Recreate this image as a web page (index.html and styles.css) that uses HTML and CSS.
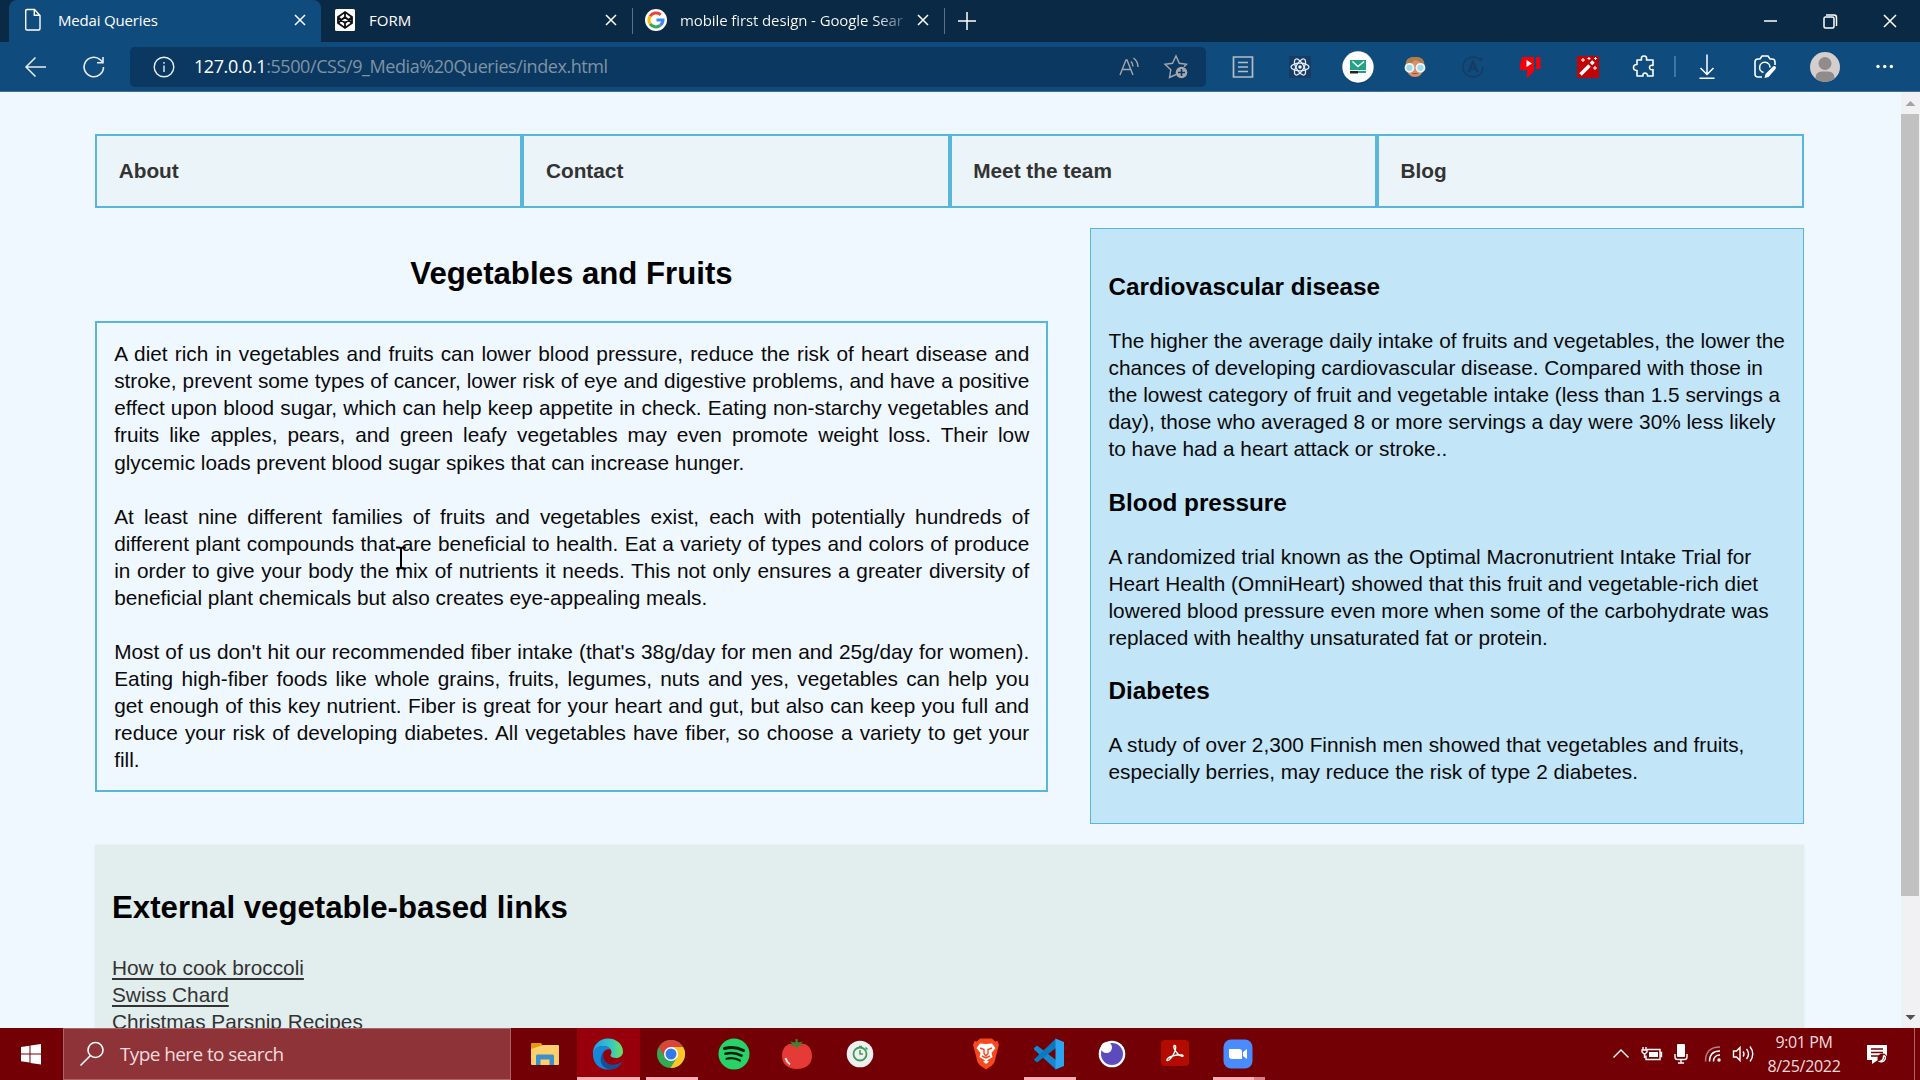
FILE: index.html
```html
<!DOCTYPE html>
<html lang="en">
<head>
<meta charset="utf-8">
<title>Medai Queries</title>
<link rel="stylesheet" href="styles.css">
</head>
<body>
<div class="tabs">
  <div class="tab active">
    <svg class="fav" width="20" height="24" viewBox="0 0 20 24" fill="none" stroke="#fff" stroke-width="1.4"><path d="M2.7 2.7Q2.7 1.5 4 1.5h7.500l5.500 6v13Q17 22 15.700 22H4Q2.700 22 2.700 20.700zM11.300 1.500v5.700h5.700"/></svg>
    <span class="t1">Medai Queries</span>
    <svg class="x" width="14" height="14" viewBox="0 0 14 14"><path d="M2 2l10 10M12 2L2 12"/></svg>
  </div>
  <div class="tab second">
    <svg class="fav" width="20" height="22" viewBox="0 0 20 22"><rect width="20" height="22" rx="1.500" fill="#fff"/><path d="M10 3l7 5v6l-7 5-7-5V8zM10 3v5M10 14v5M3 8l7 6 7-6M3 14l7-6 7 6" fill="none" stroke="#111" stroke-width="1.800"/></svg>
    <span class="t2">FORM</span>
    <svg class="x" width="14" height="14" viewBox="0 0 14 14"><path d="M2 2l10 10M12 2L2 12"/></svg>
  </div>
  <div class="tab third">
    <svg class="fav" width="22" height="22" viewBox="0 0 22 22"><circle cx="11" cy="11" r="11" fill="#fff"/><g fill="none" stroke-width="3"><path d="M5.100 7.200A7 7 0 0 1 15.700 5.800" stroke="#ea4335"/><path d="M5.100 7.200a7.200 7.200 0 0 0 0 7.600" stroke="#fbbc05"/><path d="M5.100 14.800a7 7 0 0 0 10 1.700" stroke="#34a853"/><path d="M15.100 16.500A7 7 0 0 0 18 11h-6.500" stroke="#4285f4"/></g></svg>
    <span class="t3">mobile first design - Google Sear</span>
    <svg class="x" width="14" height="14" viewBox="0 0 14 14"><path d="M2 2l10 10M12 2L2 12"/></svg>
  </div>
  <svg class="plus" width="20" height="20" viewBox="0 0 20 20"><path d="M10 1v18M1 10h18"/></svg>
  <div class="winbtns">
    <svg width="60" height="20" viewBox="0 0 60 20"><path d="M24 10h13"/></svg>
    <svg width="60" height="20" viewBox="0 0 60 20"><rect x="24" y="6" width="10" height="11" rx="1.500"/><path d="M26 4h8q2.500 0 2.500 2.500V15"/></svg>
    <svg width="60" height="20" viewBox="0 0 60 20"><path d="M24 4l12 12M36 4L24 16"/></svg>
  </div>
</div>

<div class="toolbar">
  <svg class="back" width="24" height="24" viewBox="0 0 24 24"><path d="M22 12H2M11.500 2.500L2 12l9.500 9.500"/></svg>
  <svg class="reload" width="24" height="24" viewBox="0 0 24 24"><path d="M21.500 12A9.700 9.700 0 1 1 18.300 4.800L21 7.500M21 2v5.800h-6"/></svg>
  <div class="address">
    <svg width="22" height="22" viewBox="0 0 22 22" class="info"><circle cx="11" cy="11" r="9.800"/><path d="M11 9.500V16M11 6v1.800"/></svg>
    <span class="url"><b>127.0.0.1</b>:5500/CSS/9_Media%20Queries/index.html</span>
    <svg class="aloud" width="22" height="22" viewBox="0 0 22 22"><path d="M2 19L8 4h1l6 15M4.500 13.500h8M13 5.500q2 2 2 5M15.500 2q4.500 3.500 4.500 9"/></svg>
    <svg class="star" width="26" height="26" viewBox="0 0 26 26"><path d="M13 20.500l-6.500 3 1.300-7.800L2 10.300l7.500-1L13 2l3.300 7.300 7.200 1-2.500 2.500"/><circle cx="18.500" cy="18.500" r="5.800" fill="#a4a8ae" stroke="none"/><path d="M18.500 15v7M15 18.500h7" stroke="#0b3860" stroke-width="1.600"/></svg>
  </div>
  <div class="exts">
    <svg width="28" height="28" viewBox="0 0 28 28"><path d="M4.500 4h19v20h-19zM9 9.500h10M9 14h10M9 18.500h10" fill="none" stroke="#b6bcc3" stroke-width="1.700"/></svg>
    <svg width="28" height="28" viewBox="0 0 28 28"><path fill="#173b63" d="M3 3h22v22H3z"/><g fill="none" stroke="#e0edfb" stroke-width="1.300"><ellipse cx="14" cy="14" rx="9" ry="3.800"/><ellipse cx="14" cy="14" rx="9" ry="3.800" transform="rotate(60 14 14)"/><ellipse cx="14" cy="14" rx="9" ry="3.800" transform="rotate(120 14 14)"/></g><circle cx="14" cy="14" r="1.700" fill="#fff"/></svg>
    <svg width="36" height="36" viewBox="0 0 36 36"><circle cx="18" cy="19" r="15.500" fill="#0b3b66"/><circle cx="18" cy="18" r="15.700" fill="#fff"/><path fill="#21a384" d="M10 11h16v10H10z"/><path d="M12.500 12.500l5.500 5 6-5" fill="none" stroke="#fff" stroke-width="1.500"/><path fill="#222" d="M10 22h8v2.500h-8z"/><path fill="#21a384" d="M18 22h8v2h-8z"/></svg>
    <svg width="28" height="28" viewBox="0 0 28 28"><path d="M5 15Q3 4 14 4t9 11q-2 9-9 9t-9-9" fill="#d9906c"/><path d="M5 13Q4 4 14 4t9 9q-4-5-9-6-4 4-9 6" fill="#b37b48"/><g fill="#9edbe9" stroke="#eef5f7" stroke-width="1.800"><circle cx="8.500" cy="14.800" r="4"/><circle cx="19.500" cy="14.800" r="4"/></g><path d="M11.500 20.500h5" stroke="#944e42"/></svg>
    <svg width="28" height="28" viewBox="0 0 28 28"><path d="M22 8A10 10 0 1 0 24 14" fill="none" stroke="#173b63" stroke-width="1.600"/><circle cx="22" cy="6" r="1.500" fill="#173b63"/><path d="M9.500 19L14 8.500 18.500 19M11 15.500h6" fill="none" stroke="#173b63" stroke-width="2.300"/></svg>
    <svg width="28" height="28" viewBox="0 0 28 28"><path d="M6 4h12v14l-6 6.500-1.500-1 1-6.500H4V12zM20 4h4.500v12H20z" fill="#f50008"/><path d="M10.500 7l5.500 3.500-5.500 3.500z" fill="#fff"/></svg>
    <svg width="28" height="28" viewBox="0 0 28 28"><path fill="#c00508" d="M3 3h22v22H3z"/><path d="M6.500 21.500l9-9" stroke="#fff" stroke-width="3.500"/><path d="M17 11l2.500-2.500" stroke="#fff" stroke-width="3.500"/><path d="M9 5v4M7 7h4M15 4v3M13.500 5.500h3M21 13v4M19 15h4M21.500 4v3M20 5.500h3" stroke="#fff"/></svg>
    <svg width="28" height="28" viewBox="0 0 28 28"><path d="M6 7h4.500q-.8-4 2.500-4t2.500 4H22v5.500q-3.500-.8-3.500 2t3.500 2V23h-5.500q.3-1.500-1-2.500-1.500-1-3 0-1 1-.5 2.500H6v-5.500q-3.500 0-3.500-3T6 11.500z" fill="none" stroke="#fff" stroke-width="1.600" stroke-linejoin="round"/></svg>
  </div>
  <i class="divider"></i>
  <div class="exts right">
    <svg width="28" height="28" viewBox="0 0 28 28"><path d="M14 1.500v20M7.500 15l6.500 6.500 6.500-6.500M6.500 25.200h15" fill="none" stroke="#fff" stroke-width="1.500"/></svg>
    <svg width="28" height="28" viewBox="0 0 28 28"><path d="M11 24H7q-3 0-3-3V9q0-3 3-3h2l2-3h6l2 3h2q3 0 3 3v3M12.500 19.500a5.200 5.200 0 1 1 6.500-5" fill="none" stroke="#fff" stroke-width="1.600"/><path d="M13.500 25l1-4 7.500-7.500q1.500-1 2.500 0t0 2.500L17.500 24z" fill="#fff"/></svg>
    <svg class="avatar" width="30" height="30" viewBox="0 0 30 30"><clipPath id="av"><circle cx="15" cy="15" r="15"/></clipPath><g clip-path="url(#av)"><path fill="#d2cfce" d="M0 0h30v30H0z"/><circle cx="15" cy="11.500" r="6.500" fill="#918b89"/><path d="M5.500 30v-4q0-6.500 6.500-6.500h6q6.500 0 6.500 6.500v4z" fill="#918b89"/></g></svg>
    <svg width="28" height="28" viewBox="0 0 28 28" fill="#fff"><circle cx="7" cy="13.500" r="1.700"/><circle cx="13.700" cy="13.500" r="1.700"/><circle cx="20.400" cy="13.500" r="1.700"/></svg>
  </div>
</div>

<div class="viewport">
  <div class="page">
    <nav class="menu">
      <a>About</a><a>Contact</a><a>Meet the team</a><a>Blog</a>
    </nav>
    <div class="columns">
      <main>
        <h2>Vegetables and Fruits</h2>
        <article>
          <p>A diet rich in vegetables and fruits can lower blood pressure, reduce the risk of heart disease and stroke, prevent some types of cancer, lower risk of eye and digestive problems, and have a positive effect upon blood sugar, which can help keep appetite in check. Eating non-starchy vegetables and fruits like apples, pears, and green leafy vegetables may even promote weight loss. Their low glycemic loads prevent blood sugar spikes that can increase hunger.</p>
          <p>At least nine different families of fruits and vegetables exist, each with potentially hundreds of different plant compounds that are beneficial to health. Eat a variety of types and colors of produce in order to give your body the mix of nutrients it needs. This not only ensures a greater diversity of beneficial plant chemicals but also creates eye-appealing meals.</p>
          <p>Most of us don't hit our recommended fiber intake (that's 38g/day for men and 25g/day for women). Eating high-fiber foods like whole grains, fruits, legumes, nuts and yes, vegetables can help you get&nbsp;enough of this key nutrient. Fiber is great for your heart and gut, but also can keep you full and reduce your risk of developing diabetes. All vegetables have fiber, so choose a variety to get your fill.</p>
        </article>
      </main>
      <aside>
        <h3>Cardiovascular disease</h3>
        <p>The higher the average daily intake of fruits and vegetables, the lower the chances of developing cardiovascular disease. Compared with those in the lowest category of fruit and vegetable intake (less than 1.5 servings a day), those who averaged 8 or more servings a day were 30% less likely to have had a heart attack or stroke..</p>
        <h3>Blood pressure</h3>
        <p>A randomized trial known as the Optimal Macronutrient Intake Trial for Heart Health (OmniHeart) showed that this fruit and vegetable-rich diet lowered blood pressure even more when some of the carbohydrate was replaced with healthy unsaturated fat or protein.</p>
        <h3>Diabetes</h3>
        <p>A study of over 2,300 Finnish men showed that vegetables and fruits, especially berries, may reduce the risk of type 2 diabetes.</p>
      </aside>
    </div>
    <section class="links">
      <h2>External vegetable-based links</h2>
      <a>How to cook broccoli</a>
      <a>Swiss Chard</a>
      <a>Christmas Parsnip Recipes</a>
    </section>
  </div>
  <div class="scrollbar">
    <svg width="19" height="22" viewBox="0 0 19 22"><path d="M4.500 14l5-5 5 5z" fill="#a3a3a3"/></svg>
    <div class="thumb"></div>
    <svg class="down" width="19" height="22" viewBox="0 0 19 22"><path d="M4.500 9l5 5 5-5z" fill="#505050"/></svg>
  </div>
  <svg class="cursor" width="12" height="24" viewBox="0 0 12 24"><path d="M1 1.500h3q2 0 2 2 0-2 2-2h3M6 3v18M1 22.500h3q2 0 2-2 0 2 2 2h3" fill="none" stroke="#000" stroke-width="2"/></svg>
</div>

<div class="taskbar">
  <div class="start"><svg width="22" height="22" viewBox="0 0 22 22" fill="#fff"><path d="M1 4l8.500-1.300V10.500H1zM10.500 2.500L21 1v9.500H10.500zM1 11.500h8.500v8L1 18.300zM10.500 11.500H21V21.500l-10.500-1.600z"/></svg></div>
  <div class="search">
    <svg width="26" height="26" viewBox="0 0 26 26" fill="none" stroke="#fff" stroke-width="1.600"><circle cx="16.500" cy="9" r="7.500"/><path d="M11.500 14.500L1.500 24.500"/></svg>
    <span>Type here to search</span>
  </div>
  <div class="apps">
    <div class="app"><svg width="32" height="32" viewBox="0 0 32 32"><path d="M2 6q0-1 1-1h9l2 3v4H2z" fill="#e29b0c"/><path d="M2 11l12-4h15q1 0 1 1v18q0 1-1 1H3q-1 0-1-1z" fill="#fcd06a"/><path d="M7 27v-9q0-1.500 1.500-1.500h15q1.500 0 1.500 1.500v9h-4.500v-5.500h-9V27z" fill="#3e8fd0"/></svg></div>
    <div class="app current"><svg width="32" height="32" viewBox="0 0 32 32"><defs><linearGradient id="eg" x1="0" y1="0" x2="1" y2="0"><stop offset=".2" stop-color="#28a8e3"/><stop offset=".6" stop-color="#36c7c1"/><stop offset="1" stop-color="#6fe05d"/></linearGradient></defs><path d="M1 17C0 8 7 .5 16 .5S31 7 31 13.500c0 4-3 6.500-7 6.500-3 0-5.500-1-5.500-2.500 0-1 1-1.500 1-3.500 0-3-3.500-6-8.500-6C5.500 8 2 11.500 1 17" fill="url(#eg)"/><path d="M1 15C2 10.500 6 8 11 8c3.500 0 6 1.500 7.500 3.500-4-1-8 1.500-8 6.500 0 6 4 10.500 11 11.500-2 1.500-4 2-6 2C7 31.500 0 24 1 15" fill="#1686d8"/><path d="M13 12.500c-3 3-2.500 10 3 13 5 2.500 9 1 12.500-1 .8-.4 1.300.2.800 1-3 4.500-7 6-12 6C11 30 7.500 25 9 19c.5-3 2-5 4-6.500" fill="#154f99"/></svg></div>
    <div class="app open"><svg width="30" height="30" viewBox="0 0 30 30"><circle cx="15" cy="15" r="14" fill="#34a853"/><path d="M15 15L2.900 8A14 14 0 0 1 27.100 8H15z" fill="#dc443b"/><path d="M15 8h12.100A14 14 0 0 1 14.500 29l6.500-10.500z" fill="#fcc629"/><path d="M2.900 8L9 18.500 15 15V8z" fill="#dc443b"/><circle cx="15" cy="15" r="7" fill="#fff"/><circle cx="15" cy="15" r="5.500" fill="#3479ea"/></svg></div>
    <div class="app"><svg width="32" height="32" viewBox="0 0 32 32"><circle cx="16" cy="16" r="15.500" fill="#25d366"/><g fill="none" stroke="#071b0d" stroke-linecap="round"><path d="M6.500 10.500q10-2.800 19 2" stroke-width="3"/><path d="M7.500 15.700q9-2.200 16 2" stroke-width="2.600"/><path d="M8.500 20.700q7.500-1.700 13.500 1.800" stroke-width="2.200"/></g></svg></div>
    <div class="app"><svg width="32" height="32" viewBox="0 0 32 32"><path d="M16 6c9-2 15 3 15 12 0 8-6 13-15 13S1 26 1 18C1 9 7 4 16 6" fill="#e63a36"/><path d="M14.500 1h2l.5 3.500 5-1-3 3 4 1.500h-5.500L16 11l-1.500-3H8l4-1.500-3-3 5.500 1z" fill="#3f8130"/><path d="M4.500 20q1 4 4.500 6.500" stroke="#ffe6df" stroke-width="2" fill="none"/></svg></div>
    <div class="app"><svg width="28" height="28" viewBox="0 0 28 28"><circle cx="14" cy="14" r="13.300" fill="#efefef"/><circle cx="14" cy="14" r="6.500" fill="none" stroke="#3f9b58" stroke-width="1.800"/><path d="M14 10v4h3M19.500 7.500l2 2M13 6.500h3" fill="none" stroke="#3f9b58" stroke-width="1.500"/></svg></div>
    <div class="app"></div>
    <div class="app"><svg width="30" height="32" viewBox="0 0 30 32"><path d="M9 .5h12l3 3 2.500-.5L28 7l-1 3-3.500 14q-1 3-8.500 7.500Q7.500 27 6.500 24L3 10 2 7l1.500-4 2.500.5z" fill="#f8481e"/><path d="M15 6l6-.5L24.500 10l-4 5 1 4-4 2.500L15 23l-2.500-1.500-4-2.500 1-4-4-5L9 5.500z" fill="#fff"/><path d="M9 10l4 1.500v4L15 18l2-2.500v-4l4-1.500M11 18l4 2 4-2" fill="none" stroke="#f8481e" stroke-width="1.400"/><path d="M12 23.500l3-1.500 3 1.500-3 2.500z" fill="#fff"/></svg></div>
    <div class="app open"><svg width="32" height="32" viewBox="0 0 32 32"><path d="M1 10l3-2.500L23 22v9.500L1 11.500z" fill="#1686ce"/><path d="M1 21.500L23 .5V10L4 24.500 1 22z" fill="#0c79bf"/><path d="M22.500.5L31 4v24l-8.500 3.500z" fill="#2ba5ee"/></svg></div>
    <div class="app"><svg width="28" height="28" viewBox="0 0 28 28"><circle cx="14" cy="14" r="13.300" fill="#fff"/><circle cx="14" cy="14" r="11" fill="#5d4bbd"/><circle cx="8.500" cy="7.500" r="5.500" fill="#fff"/></svg></div>
    <div class="app"><svg width="30" height="30" viewBox="0 0 30 30"><rect x="1" y="1" width="28" height="26" rx="4" fill="#b30b00"/><path d="M14 6.500q2.200-.8 1.500 3.500-1.500 6.500-6.500 11-2.500 1.500-2-.5 1-3 10-4.500 6.500-.5 6 1-1.500 1.500-5.500-2.500Q13 9.500 14 6.500" fill="none" stroke="#fff" stroke-width="1.400"/></svg></div>
    <div class="app open split"><svg width="30" height="30" viewBox="0 0 30 30"><rect x=".5" y=".5" width="29" height="29" rx="7.500" fill="#4a8cff"/><path d="M6 10h10q3 0 3 3v7H9q-3 0-3-3zM20 13l4-3v10l-4-3z" fill="#fff"/></svg></div>
  </div>
  <div class="tray">
    <svg width="20" height="20" viewBox="0 0 20 20"><path d="M2.500 13.500l7.500-7.500 7.500 7.500"/></svg>
    <svg width="22" height="20" viewBox="0 0 22 20"><path d="M6 5.500h13v10H5v-4M19.500 8.500h1v4h-1M2 3v3M5 3v3M1 6h5v2L3.500 10.500 1 8zM3.500 10.500V14"/><path d="M8 8h9v5H8z" fill="#fff" stroke="none"/></svg>
    <svg class="mic" width="16" height="22" viewBox="0 0 16 22"><rect x="4" y="1" width="8" height="13" rx="1" fill="#fff" stroke="none"/><path d="M2 11v3q0 2.500 2.500 2.500h7Q14 16.500 14 14v-3M8 17v3M5 20h6"/></svg>
    <svg class="wifi" width="18" height="18" viewBox="0 0 18 18"><circle cx="15" cy="15" r="1.700" fill="#fff" stroke="none"/><path d="M9.500 16.500Q9.500 10 16 10M5.500 16.500Q5.500 6 16 6"/><path d="M1.500 16.500Q1.500 2 16 2" opacity=".5"/></svg>
    <svg class="sound" width="22" height="20" viewBox="0 0 22 20"><path d="M1.500 7h3L8 3.500v13L4.500 13h-3zM11 7.500q2 2.500 0 5M14.500 5q4 5 0 10M18 2.500q5.500 7.500 0 15"/></svg>
    <div class="clock"><span class="time">9:01 PM</span><span class="date">8/25/2022</span></div>
    <svg class="note" width="22" height="22" viewBox="0 0 22 22"><path d="M1 2h20v15h-9l-6 4v-4H1z" fill="#fff" stroke="none"/><path d="M5 6h12M5 9.500h12M5 13h8" stroke="#730005"/><circle cx="16.500" cy="15.500" r="5" fill="#730005" stroke="none"/><path d="M17.500 12.500q3 1 1.500 4t-5 2q4-1.500 3.500-6"/></svg>
    <i class="edge"></i>
  </div>
</div>
</body>
</html>
```
FILE: styles.css
```css
* { box-sizing: border-box; }
body {
  margin: 0;
  width: 1920px;
  height: 1080px;
  overflow: hidden;
  display: flex;
  flex-direction: column;
  font-family: "Open Sans", "Noto Sans", sans-serif;
}
svg { display: block; flex: none; }

/* Browser tabs */
.tabs {
  height: 42px;
  flex: none;
  display: flex;
  align-items: center;
  background: #0a2944;
  padding: 0 0 0 9px;
  color: #fff;
  font-size: 15px;
}
.tab { height: 42px; display: flex; align-items: center; white-space: nowrap; }
.tab .fav { margin-right: 14px; }
.tab.active { width: 312px; background: #104b7d; border-radius: 8px 8px 0 0; padding: 0 14px 2px 14px; }
.tab.active .fav { margin-right: 15px; }
.tab.second { width: 312px; padding: 0 15px 2px 14px; }
.tab.third { width: 312px; padding: 0 15px 2px 12px; }
.tab.third .fav { margin-right: 13px; }
.tab.second, .tab.third {
  background: linear-gradient(#5b7187, #5b7187) right 0 top 8px / 1px 26px no-repeat;
}
.tab .x { margin-left: auto; }
.x, .plus, .winbtns svg { fill: none; stroke: #fff; stroke-width: 1.5; }
.t1 { letter-spacing: -0.17px; }
.t2 { letter-spacing: 0; }
.t3 {
  width: 226px;
  overflow: hidden;
  letter-spacing: -0.1px;
  background: linear-gradient(90deg, #fff 87%, #31506c 100%);
  -webkit-background-clip: text;
  color: transparent;
}
.plus { margin-left: 12px; }
.winbtns { margin-left: auto; display: flex; }

/* Toolbar */
.toolbar {
  height: 50px;
  flex: none;
  display: flex;
  align-items: center;
  background: #104b7d;
  border-bottom: 1px solid #3f6d94;
  padding-left: 24px;
}
.back, .reload { fill: none; stroke: #e6edf4; stroke-width: 1.5; }
.reload { margin-left: 34px; stroke-width: 1.6; }
.address {
  width: 1076px;
  height: 40px;
  margin-left: 24px;
  padding: 0 17px 0 23px;
  display: flex;
  align-items: center;
  background: #0b3860;
  border-radius: 5px;
}
.address svg { fill: none; stroke: #a4a8ae; stroke-width: 1.4; }
.address .info { stroke: #e6edf4; }
.url { margin-left: 19px; padding-bottom: 1px; font-size: 18px; color: #7f93a4; letter-spacing: -0.42px; white-space: nowrap; }
.url b { font-weight: 400; color: #fff; }
.aloud { margin-left: auto; }
.star { margin-left: 23px; }
.exts { width: 460px; margin-left: 8px; display: grid; grid-template-columns: repeat(8, 1fr); justify-items: center; align-items: center; }
.exts.right { width: auto; margin-left: 0; grid-template-columns: 62px 54px 65px 56px; }
.divider { width: 2px; height: 21px; background: #3f75a3; }

/* Web page */
.viewport {
  height: 936px;
  flex: none;
  display: flex;
  position: relative;
  overflow: hidden;
  background: #f0f8ff;
}
.page {
  width: 1901px;
  padding: 42px 97px 0 95px;
  font-family: "Liberation Sans", Arial, sans-serif;
  font-size: 20.8px;
  line-height: 27.04px;
  color: #0a0a0a;
}
.menu { display: grid; grid-template-columns: repeat(4, 1fr); height: 74px; }
.menu a {
  border: 2px solid #58b6db;
  background: #ebf4f9;
  padding: 0 21.7px;
  display: flex;
  align-items: center;
  font-weight: 700;
  color: #333;
}
.columns { display: grid; grid-template-columns: 953px 714px; justify-content: space-between; align-items: start; margin-top: 20px; }
h2 { margin: 25.9px 0; font-size: 31.2px; line-height: 40.56px; color: #000; }
h3 { margin: 24.3px 0; font-size: 24.3px; line-height: 31.6px; color: #000; }
main h2 { text-align: center; margin-bottom: 26.5px; }
article { border: 2px solid #58b6db; padding: 17.4px 16.8px 16.6px 17.2px; text-align: justify; }
article p { margin: 0 0 27.04px; }
article p:last-child { margin-bottom: 0; }
aside {
  height: 596px;
  padding: 18px 17px 16px 17.5px;
  border: 1px solid #58b6db;
  background: #c2e5f8;
  display: flow-root;
}
aside p { margin: 0; }
.links {
  margin-top: 21px;
  height: 300px;
  padding: 17px;
  display: flow-root;
  background: #e2eeee;
  box-shadow: 0 0 3px #e2eaf0;
}
.links a { display: block; width: max-content; color: #333; text-decoration: underline; text-decoration-thickness: 2px; text-underline-offset: 3px; }

.scrollbar { width: 19px; background: #f1f0f2; display: flex; flex-direction: column; }
.thumb { height: 782px; background: #c1c1c1; margin-right: 1px; }
.down { margin-top: auto; }
.cursor { position: absolute; left: 395px; top: 454px; }

/* Taskbar */
.taskbar { height: 52px; flex: none; display: flex; background: #730005; color: #f4dcdc; }
.start { width: 63px; display: flex; align-items: center; justify-content: center; padding-right: 1px; }
.search {
  width: 448px;
  display: flex;
  align-items: center;
  padding-left: 15px;
  background: #8e3338;
  border: 1px solid #a8666a;
  font-size: 19px;
}
.search span { margin-left: 15px; letter-spacing: -0.6px; }
.apps { display: flex; margin-left: 3px; }
.app { width: 63px; display: flex; align-items: center; justify-content: center; padding: 0 1px 1px 0; }
.current { background: linear-gradient(#ffb0b4, #ffb0b4) bottom / 100% 3px no-repeat #97000a; }
.open { background: linear-gradient(#ffb0b4, #ffb0b4) bottom / 52px 3px no-repeat; }
.split { background: linear-gradient(90deg, #ffb0b4 41px, #d58388 41px) bottom / 52px 3px no-repeat; }
.tray { margin-left: auto; display: flex; align-items: center; }
.tray svg { fill: none; stroke: #fff; stroke-width: 1.4; margin-right: 10px; }
.tray .mic { margin-right: 15px; }
.tray .sound { margin-right: 0; }
.clock { width: 80px; margin-left: 10px; display: flex; flex-direction: column; align-items: center; font-size: 16px; line-height: 24px; }
.time { letter-spacing: -0.4px; }
.date { letter-spacing: -0.3px; }
.tray .note { margin: 0 26px 0 22px; }
.edge { width: 1px; height: 52px; margin-right: 5px; background: #a8666a; }
```
